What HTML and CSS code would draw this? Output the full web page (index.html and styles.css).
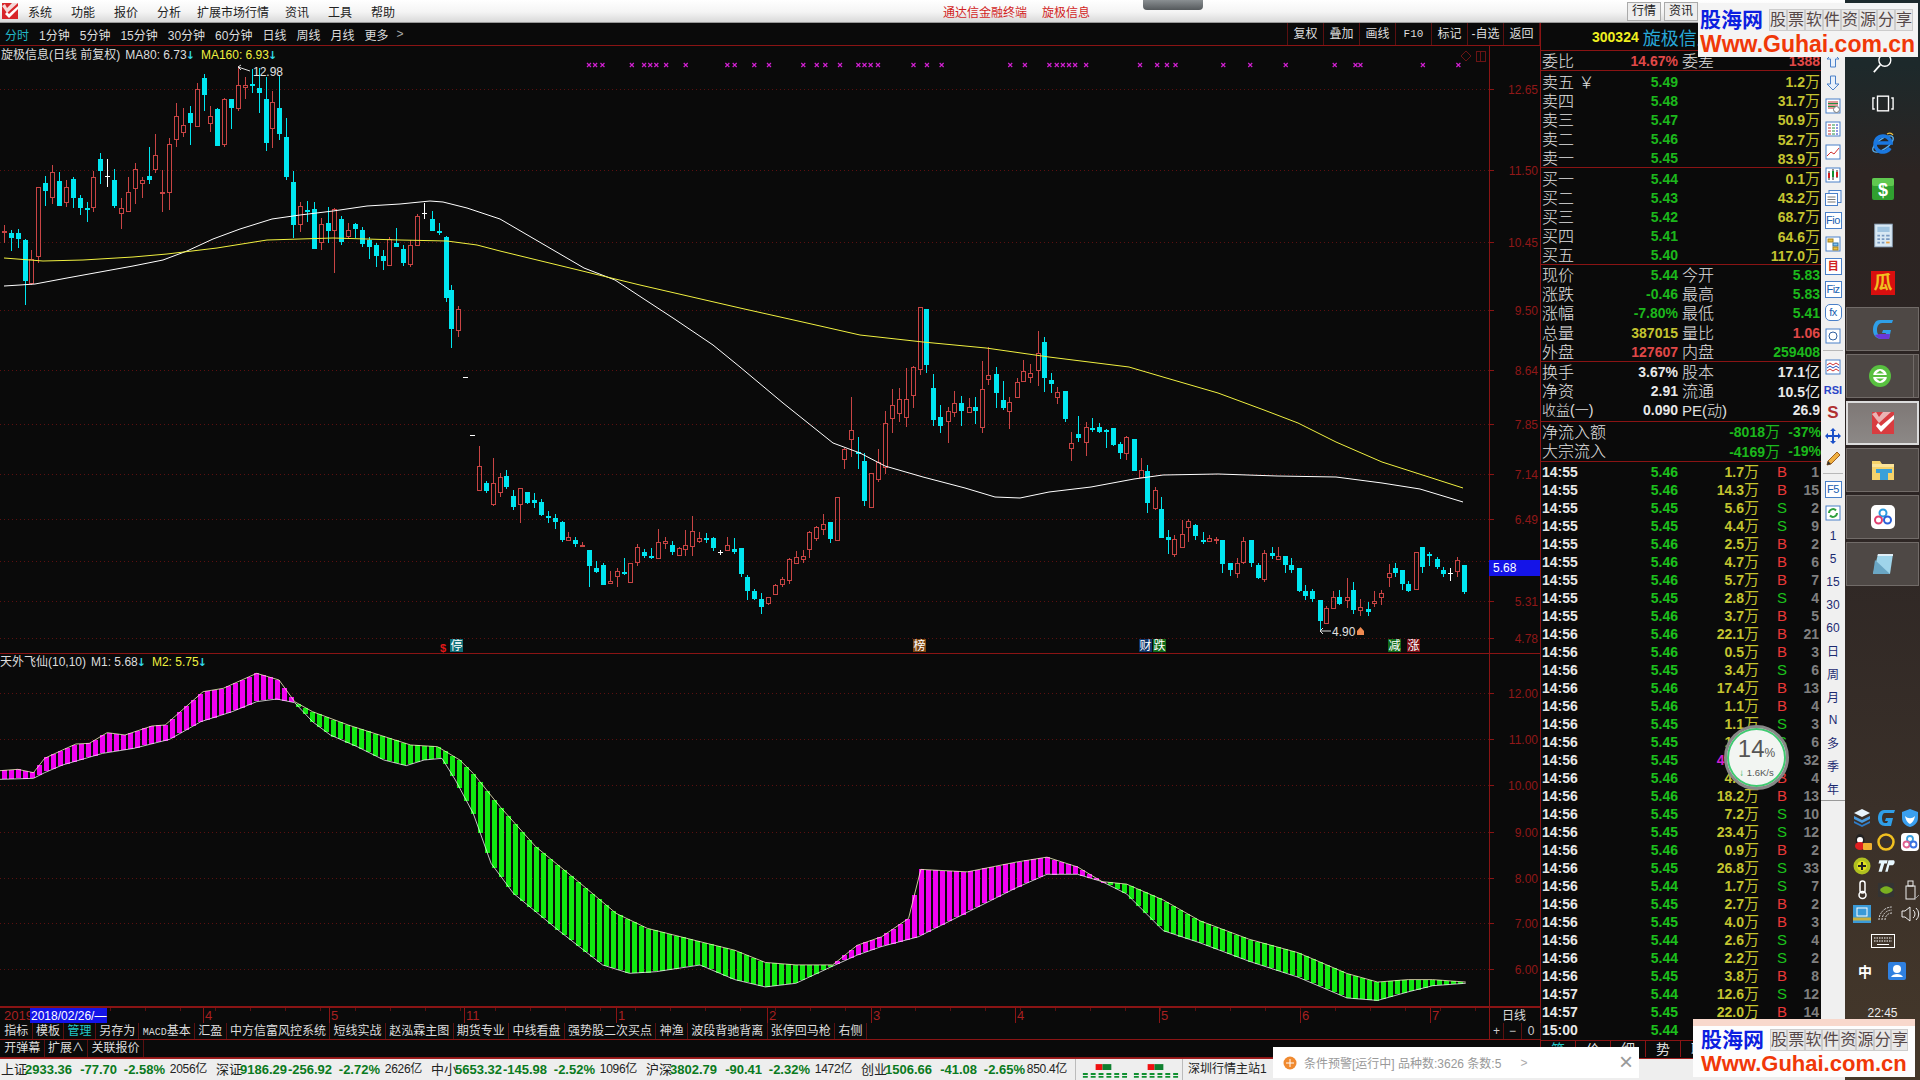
FILE: index.html
```html
<!DOCTYPE html>
<html lang="zh-CN">
<head>
<meta charset="utf-8">
<title>旋极信息</title>
<link rel="stylesheet" href="styles.css">
</head>
<body>
<div class="app">
  <div class="main">
    <header class="titlebar">
      <svg class="logo" viewBox="0 0 16 16"><rect width="16" height="16" fill="#d8262a"/><path d="M0 3 L5 10 L16 0 L10 0 L5 5 L3 1 Z" fill="#f4d8d8"/><path d="M3 11 L7 15 L16 6 L16 3 L7 11 L5 9Z" fill="#fff"/></svg>
      <nav class="menu"><span>系统</span><span>功能</span><span>报价</span><span>分析</span><span class="wide">扩展市场行情</span><span>资讯</span><span>工具</span><span>帮助</span></nav>
      <div class="title-center"><span>通达信金融终端</span><span>旋极信息</span></div>
      <div class="grab"></div>
      <div class="title-btns"><span>行情</span><span>资讯</span></div>
    </header>
    <div class="workspace">
      <section class="left">
        <div class="toolbar">
          <div class="periods"><span class="on">分时</span><span>1分钟</span><span>5分钟</span><span>15分钟</span><span>30分钟</span><span>60分钟</span><span>日线</span><span>周线</span><span>月线</span><span>更多</span><span class="more">&gt;</span></div>
          <div class="tools"><span>复权</span><span>叠加</span><span>画线</span><span class="f10">F10</span><span>标记</span><span>-自选</span><span>返回</span></div>
        </div>
        <div class="panel panel-up">
          <svg id="upper" class="chart" width="1540" height="607" viewBox="0 46 1540 607"></svg>
          <div class="legend"><span>旋极信息(日线 前复权)</span><span class="white">MA80: 6.73<b>↓</b></span><span class="yellow">MA160: 6.93<b>↓</b></span></div>
        </div>
        <div class="panel panel-low">
          <svg id="lower" class="chart" width="1540" height="352" viewBox="0 654 1540 352"></svg>
          <div class="legend legend-low"><span>天外飞仙(10,10)</span><span class="white">M1: 5.68<b>↓</b></span><span class="yellow">M2: 5.75<b>↓</b></span></div>
        </div>
        <svg id="axis" class="axis" width="1540" height="16" viewBox="0 1007 1540 16"></svg>
        <div class="tabs">
          <span>指标</span><span>模板</span><span class="on">管理</span><span>另存为</span><span><i>MACD</i>基本</span><span>汇盈</span><span>中方信富风控系统</span><span>短线实战</span><span>赵泓霖主图</span><span>期货专业</span><span>中线看盘</span><span>强势股二次买点</span><span>神渔</span><span>波段背驰背离</span><span>张停回马枪</span><span>右侧</span>
          <div class="zoomers"><span>+</span><span>−</span><span>0</span></div>
        </div>
        <div class="tabs tabs-2"><span>开弹幕</span><span>扩展∧</span><span>关联报价</span></div>
      </section>
      <section class="quote">
        <div class="q-head"><b>300324</b><span>旋极信息</span></div>
        <div class="q-sec q-ratio"><div class="q"><span>委比</span><span class="red">14.67%</span><span>委差</span><span class="red">1388</span></div></div>
        <div class="q-sec q-book">
          <div class="q"><span>卖五 ￥</span><span class="grn">5.49</span><span></span><span class="yel">1.2<i>万</i></span></div>
          <div class="q"><span>卖四</span><span class="grn">5.48</span><span></span><span class="yel">31.7<i>万</i></span></div>
          <div class="q"><span>卖三</span><span class="grn">5.47</span><span></span><span class="yel">50.9<i>万</i></span></div>
          <div class="q"><span>卖二</span><span class="grn">5.46</span><span></span><span class="yel">52.7<i>万</i></span></div>
          <div class="q"><span>卖一</span><span class="grn">5.45</span><span></span><span class="yel">83.9<i>万</i></span></div>
        </div>
        <div class="q-sec q-book">
          <div class="q"><span>买一</span><span class="grn">5.44</span><span></span><span class="yel">0.1<i>万</i></span></div>
          <div class="q"><span>买二</span><span class="grn">5.43</span><span></span><span class="yel">43.2<i>万</i></span></div>
          <div class="q"><span>买三</span><span class="grn">5.42</span><span></span><span class="yel">68.7<i>万</i></span></div>
          <div class="q"><span>买四</span><span class="grn">5.41</span><span></span><span class="yel">64.6<i>万</i></span></div>
          <div class="q"><span>买五</span><span class="grn">5.40</span><span></span><span class="yel">117.0<i>万</i></span></div>
        </div>
        <div class="q-sec q-book">
          <div class="q"><span>现价</span><span class="grn">5.44</span><span>今开</span><span class="grn">5.83</span></div>
          <div class="q"><span>涨跌</span><span class="grn">-0.46</span><span>最高</span><span class="grn">5.83</span></div>
          <div class="q"><span>涨幅</span><span class="grn">-7.80%</span><span>最低</span><span class="grn">5.41</span></div>
          <div class="q"><span>总量</span><span class="yel">387015</span><span>量比</span><span class="red">1.06</span></div>
          <div class="q"><span>外盘</span><span class="red">127607</span><span>内盘</span><span class="grn">259408</span></div>
        </div>
        <div class="q-sec q-info">
          <div class="q"><span>换手</span><span class="wht">3.67%</span><span>股本</span><span class="wht">17.1<i>亿</i></span></div>
          <div class="q"><span>净资</span><span class="wht">2.91</span><span>流通</span><span class="wht">10.5<i>亿</i></span></div>
          <div class="q"><span>收益(一)</span><span class="wht">0.090</span><span>PE(动)</span><span class="wht">26.9</span></div>
        </div>
        <div class="q-sec q-flow">
          <div class="f"><span>净流入额</span><span class="grn">-8018<i>万</i></span><span class="grn">-37%</span></div>
          <div class="f"><span>大宗流入</span><span class="grn">-4169<i>万</i></span><span class="grn">-19%</span></div>
        </div>
        <div class="ticks">
          <div class="t buy"><span>14:55</span><span>5.46</span><span>1.7<i>万</i></span><span>B</span><span>1</span></div>
          <div class="t buy"><span>14:55</span><span>5.46</span><span>14.3<i>万</i></span><span>B</span><span>15</span></div>
          <div class="t sel"><span>14:55</span><span>5.45</span><span>5.6<i>万</i></span><span>S</span><span>2</span></div>
          <div class="t sel"><span>14:55</span><span>5.45</span><span>4.4<i>万</i></span><span>S</span><span>9</span></div>
          <div class="t buy"><span>14:55</span><span>5.46</span><span>2.5<i>万</i></span><span>B</span><span>2</span></div>
          <div class="t buy"><span>14:55</span><span>5.46</span><span>4.7<i>万</i></span><span>B</span><span>6</span></div>
          <div class="t buy"><span>14:55</span><span>5.46</span><span>5.7<i>万</i></span><span>B</span><span>7</span></div>
          <div class="t sel"><span>14:55</span><span>5.45</span><span>2.8<i>万</i></span><span>S</span><span>4</span></div>
          <div class="t buy"><span>14:55</span><span>5.46</span><span>3.7<i>万</i></span><span>B</span><span>5</span></div>
          <div class="t buy"><span>14:56</span><span>5.46</span><span>22.1<i>万</i></span><span>B</span><span>21</span></div>
          <div class="t buy"><span>14:56</span><span>5.46</span><span>0.5<i>万</i></span><span>B</span><span>3</span></div>
          <div class="t sel"><span>14:56</span><span>5.45</span><span>3.4<i>万</i></span><span>S</span><span>6</span></div>
          <div class="t buy"><span>14:56</span><span>5.46</span><span>17.4<i>万</i></span><span>B</span><span>13</span></div>
          <div class="t buy"><span>14:56</span><span>5.46</span><span>1.1<i>万</i></span><span>B</span><span>4</span></div>
          <div class="t sel"><span>14:56</span><span>5.45</span><span>1.1<i>万</i></span><span>S</span><span>3</span></div>
          <div class="t sel"><span>14:56</span><span>5.45</span><span>1.2<i>万</i></span><span>S</span><span>6</span></div>
          <div class="t sel big"><span>14:56</span><span>5.45</span><span>43.6<i>万</i></span><span>S</span><span>32</span></div>
          <div class="t buy"><span>14:56</span><span>5.46</span><span>4.0<i>万</i></span><span>B</span><span>4</span></div>
          <div class="t buy"><span>14:56</span><span>5.46</span><span>18.2<i>万</i></span><span>B</span><span>13</span></div>
          <div class="t sel"><span>14:56</span><span>5.45</span><span>7.2<i>万</i></span><span>S</span><span>10</span></div>
          <div class="t sel"><span>14:56</span><span>5.45</span><span>23.4<i>万</i></span><span>S</span><span>12</span></div>
          <div class="t buy"><span>14:56</span><span>5.46</span><span>0.9<i>万</i></span><span>B</span><span>2</span></div>
          <div class="t sel"><span>14:56</span><span>5.45</span><span>26.8<i>万</i></span><span>S</span><span>33</span></div>
          <div class="t sel"><span>14:56</span><span>5.44</span><span>1.7<i>万</i></span><span>S</span><span>7</span></div>
          <div class="t buy"><span>14:56</span><span>5.45</span><span>2.7<i>万</i></span><span>B</span><span>2</span></div>
          <div class="t buy"><span>14:56</span><span>5.45</span><span>4.0<i>万</i></span><span>B</span><span>3</span></div>
          <div class="t sel"><span>14:56</span><span>5.44</span><span>2.6<i>万</i></span><span>S</span><span>4</span></div>
          <div class="t sel"><span>14:56</span><span>5.44</span><span>2.2<i>万</i></span><span>S</span><span>2</span></div>
          <div class="t buy"><span>14:56</span><span>5.45</span><span>3.8<i>万</i></span><span>B</span><span>8</span></div>
          <div class="t sel"><span>14:57</span><span>5.44</span><span>12.6<i>万</i></span><span>S</span><span>12</span></div>
          <div class="t buy"><span>14:57</span><span>5.45</span><span>22.0<i>万</i></span><span>B</span><span>14</span></div>
          <div class="t sel"><span>15:00</span><span>5.44</span><span></span><span></span><span></span></div>
        </div>
        <div class="q-tabs"><span class="on">笔</span><span>价</span><span>细</span><span>势</span><span>联</span></div>
      </section>
      <aside class="strip">
        <div class="ic"><svg viewBox="0 0 18 18"><path d="M9 2 L15 8 H11.5 V16 H6.5 V8 H3Z" fill="#e8f0fa" stroke="#4a80c8"/></svg></div>
        <div class="ic"><svg viewBox="0 0 18 18"><path d="M9 16 L15 10 H11.5 V2 H6.5 V10 H3Z" fill="#e8f0fa" stroke="#4a80c8"/></svg></div>
        <div class="ic"><svg viewBox="0 0 18 18"><rect x="2" y="2" width="14" height="14" fill="#fff" stroke="#4a80c8"/><path d="M4 5h10M4 8h10M4 11h6" stroke="#c03030"/><path d="M4 6.500h10M4 9.500h8" stroke="#209040"/><circle cx="12.500" cy="12.500" r="3" fill="#fff" stroke="#777"/></svg></div>
        <div class="ic"><svg viewBox="0 0 18 18"><rect x="2" y="2" width="14" height="14" fill="#fff" stroke="#4a80c8"/><path d="M4 5h3M4 8h3M4 11h3M4 14h3" stroke="#c03030"/><path d="M8 5h3M8 8h3M8 11h3M8 14h3" stroke="#209040"/><path d="M12 5h2M12 8h2M12 11h2M12 14h2" stroke="#2030c0"/></svg></div>
        <div class="ic"><svg viewBox="0 0 18 18"><rect x="2" y="2" width="14" height="14" fill="#fff" stroke="#4a80c8"/><path d="M3 13 L7 9 L10 11 L15 5" fill="none" stroke="#d03030"/></svg></div>
        <div class="ic"><svg viewBox="0 0 18 18"><rect x="2" y="2" width="14" height="14" fill="#fff" stroke="#4a80c8"/><path d="M5 5v9M9 3v11M13 4v8" stroke="#222"/><rect x="4" y="7" width="2" height="5" fill="#d02020"/><rect x="8" y="5" width="2" height="6" fill="#109030"/><rect x="12" y="6" width="2" height="5" fill="#d02020"/></svg></div>
        <div class="ic"><svg viewBox="0 0 18 18"><rect x="5" y="1.500" width="12" height="12" fill="#f4f8ff" stroke="#4a80c8"/><rect x="1.500" y="4.500" width="12" height="12" fill="#fff" stroke="#4a80c8"/><path d="M3.500 8h8M3.500 10.500h8M3.500 13h8" stroke="#777"/></svg></div>
        <div class="ic boxed"><span>Fio</span></div>
        <div class="ic"><svg viewBox="0 0 18 18"><rect x="2" y="2" width="14" height="14" fill="#fff" stroke="#4a80c8"/><rect x="4" y="4" width="5" height="3" fill="#f0c040" stroke="#a08020"/><rect x="9" y="8" width="5" height="3" fill="#80c0f0" stroke="#3070a0"/><rect x="9" y="12" width="5" height="3" fill="#f0c040" stroke="#a08020"/></svg></div>
        <div class="ic boxed"><span class="mu">目</span></div>
        <div class="ic boxed"><span>Fiz</span></div>
        <div class="ic boxed round"><span><em>fx</em></span></div>
        <div class="ic"><svg viewBox="0 0 18 18"><rect x="2" y="2" width="14" height="14" fill="#fff" stroke="#4a80c8"/><circle cx="9" cy="9" r="4" fill="none" stroke="#3060a0"/></svg></div>
        <div class="sep"></div>
        <div class="ic"><svg viewBox="0 0 18 18"><rect x="2" y="2" width="14" height="14" fill="#fff" stroke="#4a80c8"/><path d="M3 7l3-2 3 2 3-2 3 2" fill="none" stroke="#d03030"/><path d="M3 10l3-2 3 2 3-2 3 2" fill="none" stroke="#2050c0"/><path d="M3 13l3-2 3 2 3-2 3 2" fill="none" stroke="#d03030"/></svg></div>
        <div class="ic rsi">RSI</div>
        <div class="ic dollar">S</div>
        <div class="ic"><svg viewBox="0 0 18 18"><path d="M9 1l3 3h-2v4h4V6l3 3-3 3v-2h-4v4h2l-3 3-3-3h2v-4H4v2L1 9l3-3v2h4V4H6z" fill="#1a50c8"/></svg></div>
        <div class="ic"><svg viewBox="0 0 18 18"><path d="M3 15l1-4L13 2l3 3-9 9z" fill="#f0b040" stroke="#a06020"/><path d="M3 15l1-4 3 3z" fill="#333"/></svg></div>
        <div class="sep"></div>
        <div class="ic boxed"><span>F5</span></div>
        <div class="ic"><svg viewBox="0 0 18 18"><rect x="2" y="2" width="14" height="14" fill="#fff" stroke="#4a80c8"/><path d="M5 9a4 4 0 0 1 7-2.500M13 9a4 4 0 0 1-7 2.500" fill="none" stroke="#30a040" stroke-width="2"/></svg></div>
        <div class="ic n">1</div><div class="ic n">5</div><div class="ic n">15</div><div class="ic n">30</div><div class="ic n">60</div>
        <div class="ic n">日</div><div class="ic n">周</div><div class="ic n">月</div><div class="ic n">N</div><div class="ic n">多</div><div class="ic n">季</div><div class="ic n">年</div>
        <div class="strip-end"></div>
      </aside>
    </div>
    <footer class="status">
      <div class="idx"><span>上证</span><b>2933.36</b><b>-77.70</b><b>-2.58%</b><span>2056亿</span></div>
      <div class="idx"><span>深证</span><b>9186.29</b><b>-256.92</b><b>-2.72%</b><span>2626亿</span></div>
      <div class="idx"><span>中小</span><b>5653.32</b><b>-145.98</b><b>-2.52%</b><span>1096亿</span></div>
      <div class="idx"><span>沪深</span><b>3802.79</b><b>-90.41</b><b>-2.32%</b><span>1472亿</span></div>
      <div class="idx"><span>创业</span><b>1506.66</b><b>-41.08</b><b>-2.65%</b><span>850.4亿</span></div>
      <svg class="meter" viewBox="0 0 108 22" width="108" height="22">
        <rect x="20" y="5" width="7" height="6" fill="#f01010"/><rect x="27" y="5" width="9" height="6" fill="#108030"/>
        <rect x="73" y="5" width="7" height="6" fill="#f01010"/><rect x="80" y="5" width="9" height="6" fill="#108030"/>
        <path d="M7 15h5M15 15h5M23 15h5M31 15h5M39 15h5M47 15h5M59 15h5M67 15h5M75 15h5M83 15h5M91 15h5M99 15h5M7 18h5M15 18h5M23 18h5M31 18h5M39 18h5M47 18h5M59 18h5M67 18h5M75 18h5M83 18h5M91 18h5M99 18h5" stroke="#109030" stroke-width="2"/>
      </svg>
      <div class="station">深圳行情主站1</div>
    </footer>
  </div>
  <aside class="desktop">
    <div class="dock d-search"><svg viewBox="0 0 24 24" width="22" height="22"><circle cx="14" cy="9" r="6.500" fill="none" stroke="#fff" stroke-width="1.500"/><path d="M9 14 L2 22" stroke="#fff" stroke-width="1.800"/></svg></div>
    <div class="dock d-task"><svg viewBox="0 0 24 18" width="22" height="17"><rect x="6" y="1" width="12" height="16" fill="none" stroke="#fff" stroke-width="1.500"/><path d="M3 3H1v12h2M21 3h2v12h-2" fill="none" stroke="#fff" stroke-width="1.500"/></svg></div>
    <div class="dock d-ie"><svg viewBox="0 0 24 24" width="24" height="24"><ellipse cx="12" cy="12" rx="12" ry="5" transform="rotate(-35 12 12)" fill="none" stroke="#58b0f0" stroke-width="1.300"/><path d="M19 16 A8 8 0 1 1 20 11 H6" fill="none" stroke="#1a78e0" stroke-width="3.600"/><path d="M16 2 Q20 0 22 3" fill="none" stroke="#f0c040" stroke-width="1.200"/></svg></div>
    <div class="dock d-cash"><svg viewBox="0 0 24 24" width="24" height="24"><rect x="1" y="1" width="22" height="22" rx="2" fill="#30a030"/><rect x="1" y="1" width="22" height="8" rx="2" fill="#60c850"/><text x="12" y="19" class="d-dollar">$</text></svg></div>
    <div class="dock d-calc"><svg viewBox="0 0 24 28" width="21" height="25"><rect x="2" y="1" width="20" height="26" fill="#d8e8f4" stroke="#90a8c0"/><rect x="5" y="4" width="14" height="6" fill="#a0c4e0"/><path d="M5 14h3M10 14h3M15 14h4M5 18h3M10 18h3M15 18h4M5 22h3M10 22h3" stroke="#7898c0" stroke-width="2"/><path d="M15 22h4" stroke="#e8a040" stroke-width="2"/></svg></div>
    <div class="dock d-gua"><span>瓜</span></div>
    <div class="tile"><svg viewBox="0 0 24 24" width="24" height="24"><path d="M22 3H9C4 3 2 8 2 13c0 6 4 9 9 9h7l2-9h-8l-1 3h4l-1 3h-3c-3 0-5-2-5-6s2-7 5-7h10z" fill="#2f9fe8"/><path d="M4 18c2 3 5 4 7 4h7l1-5H9z" fill="#6a38d8"/></svg></div>
    <div class="tile tile-cut"><svg viewBox="0 0 24 24" width="24" height="24"><circle cx="12" cy="12" r="11" fill="#58c040"/><circle cx="12" cy="12" r="7" fill="#fff"/><path d="M5 12h14" stroke="#58c040" stroke-width="2"/><path d="M8 9.500l4-3 4 3zM8 14.500h8l-4 3z" fill="#58c040"/></svg></div>
    <div class="tile tile-on"><svg viewBox="0 0 24 24" width="24" height="24"><rect x="1" y="1" width="22" height="22" fill="#d83c40"/><path d="M1 3 L8 12 L20 1 L12 1 L8 6 L5 1 Z" fill="#eab4b4"/><path d="M5 15 L10 21 L23 8 L23 4 L10 15 L7 12Z" fill="#fff"/></svg></div>
    <div class="tile"><svg viewBox="0 0 24 24" width="24" height="22"><path d="M1 3h8l2 3h12v16H1z" fill="#f6d36a"/><rect x="9" y="15" width="8" height="7" fill="#3aa0d8"/><rect x="5" y="11" width="16" height="4" fill="#3aa0d8"/><rect x="1" y="6" width="22" height="3" fill="#fbe49a"/></svg></div>
    <div class="tile"><svg viewBox="0 0 24 24" width="24" height="24"><rect x="0" y="0" width="24" height="24" rx="5" fill="#fff"/><circle cx="12" cy="8" r="3.500" fill="none" stroke="#2a9ce0" stroke-width="2"/><circle cx="7.500" cy="15" r="3.500" fill="none" stroke="#e04070" stroke-width="2"/><circle cx="16.500" cy="15" r="3.500" fill="none" stroke="#2a60d8" stroke-width="2"/></svg></div>
    <div class="tile"><svg viewBox="0 0 24 24" width="24" height="24"><path d="M7 2h15l-3 20H2z" fill="#9fd4ea"/><path d="M4 8L2 22h17z" fill="#6aa6c4"/><path d="M7 2h15v2H6.500z" fill="#dfeef6"/></svg></div>
    <div class="tray">
      <svg viewBox="0 0 20 20"><path d="M10 1l8 4-8 4-8-4z" fill="#e8f4fc"/><path d="M2 8l8 4 8-4v3l-8 4-8-4z" fill="#4a9ce0"/><path d="M2 13l8 4 8-4v2l-8 4-8-4z" fill="#2f7cc8"/></svg>
      <svg viewBox="0 0 20 20"><path d="M19 2H8C4 2 2 6 2 10c0 5 3 8 7 8h6l2-8h-7l-1 3h3l-1 2H9c-2 0-3-2-3-5s1-5 3-5h9z" fill="#2f9fe8"/></svg>
      <svg viewBox="0 0 20 20"><path d="M10 1l8 3v6c0 5-4 8-8 9-4-1-8-4-8-9V4z" fill="#3aa0f0"/><path d="M5 8c3 3 7 3 10 0-1 5-3 7-5 8-2-1-4-3-5-8z" fill="#fff"/></svg>
      <svg viewBox="0 0 20 20"><ellipse cx="8" cy="8" rx="4.500" ry="6" fill="#222"/><circle cx="8" cy="8" r="3" fill="#fff"/><ellipse cx="8" cy="14" rx="5" ry="4" fill="#e02020"/><rect x="11" y="11" width="9" height="7" rx="1" fill="#f0b030"/></svg>
      <svg viewBox="0 0 20 20"><circle cx="10" cy="10" r="7.500" fill="none" stroke="#f0c020" stroke-width="2.500"/><path d="M10 10h6M6 7l4 5" stroke="#333" stroke-width="2"/></svg>
      <svg viewBox="0 0 20 20"><rect x="1" y="1" width="18" height="18" rx="4" fill="#fff"/><circle cx="10" cy="7" r="3" fill="none" stroke="#3aa0e0" stroke-width="1.800"/><circle cx="6.500" cy="12.500" r="3" fill="none" stroke="#e06090" stroke-width="1.800"/><circle cx="13.500" cy="12.500" r="3" fill="none" stroke="#3a70e0" stroke-width="1.800"/></svg>
      <svg viewBox="0 0 20 20"><circle cx="10" cy="10" r="8.500" fill="#b0c020"/><circle cx="10" cy="10" r="5" fill="#e0e020"/><path d="M10 6v8M6 10h8" stroke="#222" stroke-width="2"/></svg>
      <svg viewBox="0 0 24 20"><path d="M4 3h10l-1 4H10L7 17H3L6 7H3zM15 3h6c2 0 2 5-1 6h-4l-2 8h-3z" fill="#e8f8ff"/></svg>
      <span class="tray-blank"></span>
      <svg viewBox="0 0 20 20"><rect x="8" y="1" width="5" height="12" rx="2.500" fill="none" stroke="#fff" stroke-width="1.500"/><circle cx="10.500" cy="15" r="3.500" fill="none" stroke="#fff" stroke-width="1.500"/></svg>
      <svg viewBox="0 0 20 20"><rect x="2" y="3" width="16" height="14" fill="#333"/><path d="M4 10c3-5 9-5 13 0-4 5-10 5-13 0z" fill="#7ab020"/></svg>
      <svg viewBox="0 0 20 20"><rect x="6" y="6" width="9" height="13" fill="none" stroke="#eee"/><rect x="8" y="1" width="5" height="5" fill="none" stroke="#eee"/><path d="M14 16l2 2 3-3" fill="none" stroke="#999"/></svg>
      <svg viewBox="0 0 20 20"><rect x="1" y="1" width="18" height="18" fill="#3a9ad8"/><rect x="5" y="4" width="10" height="8" fill="none" stroke="#fff"/><path d="M1 15h18" stroke="#c8b040" stroke-width="3"/></svg>
      <svg viewBox="0 0 20 20"><path d="M3 16a13 13 0 0 1 13-13M6 16a10 10 0 0 1 10-10M9 16a7 7 0 0 1 7-7" fill="none" stroke="#ddd" stroke-dasharray="2 1"/></svg>
      <svg viewBox="0 0 20 20"><path d="M2 7h3l5-4v14l-5-4H2z" fill="none" stroke="#eee"/><path d="M13 6a5 5 0 0 1 0 8M16 4a8 8 0 0 1 0 12" fill="none" stroke="#eee"/></svg>
    </div>
    <div class="kbd"><svg viewBox="0 0 24 14" width="24" height="14"><rect x=".5" y=".5" width="23" height="13" fill="none" stroke="#fff"/><path d="M3 4h18M3 7h18" stroke="#fff" stroke-dasharray="1.500 1"/><path d="M6 10.500h12" stroke="#fff"/></svg></div>
    <div class="ime"><span>中</span><svg viewBox="0 0 18 18" width="18" height="18"><rect width="18" height="18" rx="2" fill="#2f80e0"/><circle cx="9" cy="7" r="4" fill="#fff"/><path d="M3 15c2-4 10-4 12 0z" fill="#fff"/></svg></div>
    <div class="clock">22:45</div>
  </aside>

  <div class="wm wm-top">
    <div class="wm-row"><b>股海网</b><div class="wm-cells"><span>股</span><span>票</span><span>软</span><span>件</span><span>资</span><span>源</span><span>分</span><span>享</span></div></div>
    <div class="wm-url">Www.Guhai.com.cn</div>
  </div>
  <div class="wm wm-bot">
    <div class="wm-row"><b>股海网</b><div class="wm-cells"><span>股</span><span>票</span><span>软</span><span>件</span><span>资</span><span>源</span><span>分</span><span>享</span></div></div>
    <div class="wm-url">Www.Guhai.com.cn</div>
  </div>
  <div class="notice"><svg viewBox="0 0 14 14" width="14" height="14"><circle cx="7" cy="7" r="6.500" fill="#f08a30"/><path d="M3 7h8M7 3v8" stroke="#fff"/></svg><span>条件预警[运行中] 品种数:3626 条数:5</span><em>&gt;</em><b>×</b></div>
  <div class="speed"><div class="speed-pct">14<small>%</small></div><div class="speed-rate"><b>↓</b> 1.6K/s</div></div>
</div>
<script src="chart.js"></script>
</body>
</html>
```
FILE: styles.css
```css
* { box-sizing: border-box; }
html, body { margin: 0; padding: 0; background: #0a0a0a; }
body { font-family: "Liberation Sans", "Noto Sans CJK SC", sans-serif; }
.app { position: relative; width: 1920px; height: 1080px; display: flex; overflow: hidden; }
i, em { font-style: normal; }

.main { width: 1845px; height: 1080px; display: flex; flex-direction: column; background: #0a0a0a; }

.titlebar { height: 23px; display: flex; align-items: center; background: linear-gradient(#fff, #f4f4f4 55%, #d9d9d9); border-bottom: 1px solid #999; color: #222; font-size: 12px; position: relative; flex: none; }
.logo { width: 16px; height: 16px; margin: 0 0 0 2px; }
.menu { display: flex; margin-left: 10px; gap: 19px; }
.menu .wide { margin: 0 -3px; }
.title-center { position: absolute; left: 943px; top: 3px; display: flex; gap: 15px; color: #d21f1f; }
.grab { position: absolute; left: 1143px; top: 0; width: 60px; height: 10px; background: linear-gradient(#8a8f92, #55595c); border-radius: 0 0 4px 4px; }
.title-btns { position: absolute; left: 1627px; top: 2px; display: flex; gap: 3px; }
.title-btns span { width: 34px; height: 19px; border: 1px solid #aaa; background: #eee; text-align: center; line-height: 17px; }

.workspace { flex: 1; display: flex; min-height: 0; }
.left { width: 1540px; display: flex; flex-direction: column; flex: none; }
.toolbar { height: 23px; display: flex; justify-content: space-between; align-items: stretch; border-bottom: 1px solid #8a1414; color: #ddd; font-size: 12px; flex: none; }
.periods { display: flex; gap: 10px; padding-left: 5px; align-items: center; }
.periods .on { color: #22b8c8; }
.periods .more { color: #aaa; margin-left: -2px; }
.tools { display: flex; border-left: 1px solid #5a1010; }
.tools span { width: 36px; text-align: center; line-height: 22px; border-right: 1px solid #5a1010; white-space: nowrap; }
.tools .f10 { font-family: "Liberation Mono", monospace; font-size: 11px; }

.panel { position: relative; border-bottom: 1px solid #8a1414; flex: none; }
.panel-up { height: 608px; }
.panel-low { height: 353px; }
.chart, .axis { display: block; }
.axis { flex: none; }
.legend { position: absolute; left: 1px; top: 1px; display: flex; gap: 5px; font-size: 12px; color: #ddd; line-height: 16px; white-space: nowrap; }
.legend .yellow { color: #f0f040; margin-left: 2px; }
.legend .white { color: #ddd; }
.legend b { color: #30d8e8; font-family: "DejaVu Sans", sans-serif; font-size: 11px; margin: 0 -1px; }
.legend-low { top: 0; left: 0; }

.tabs { height: 17px; display: flex; border-bottom: 1px solid #8a1414; font-size: 12px; color: #ddd; line-height: 16px; padding-left: 1px; flex: none; position: relative; }
.tabs > span { padding: 0 3.300px; border-right: 1px solid #5a1010; white-space: nowrap; }
.tabs .on { color: #22c8c8; }
.tabs i { font-family: "Liberation Mono", monospace; font-size: 10px; }
.tabs-2 { height: 18px; line-height: 17px; }
.zoomers { position: absolute; right: 0; top: 0; height: 16px; width: 51px; display: grid; grid-template-columns: 14px 18px 19px; border-left: 1px solid #8a1414; text-align: center; color: #ccc; }
.zoomers span { border-right: 1px solid #5a1010; }

.quote { width: 281px; border-left: 1px solid #8a1414; display: flex; flex-direction: column; flex: none; font-size: 14px; }
.q-head { height: 28px; display: flex; align-items: center; gap: 4px; padding-left: 51px; border-bottom: 1px solid #8a1414; flex: none; }
.q-head b { color: #f0f020; font-size: 14px; }
.q-head span { color: #28a8d8; font-size: 18px; white-space: nowrap; }
.q-sec { border-bottom: 1px solid #8a1414; flex: none; }
.q-ratio { height: 20px; padding-top: 1px; }
.q-book { height: 97px; padding-top: 1px; }
.q-info { height: 60px; }
.q-flow { height: 40px; }
.q { display: grid; grid-template-columns: 40px 96px 48px 94px; height: 19.200px; padding-left: 1px; align-items: center; white-space: nowrap; }
.q-info .q { height: 19.600px; }
.q > span { line-height: 19px; }
.q > span:nth-child(odd) { color: #e0e0e0; font-size: 16px; font-weight: 300; }
.q > span:nth-child(3) { padding-left: 4px; }
.q > span:nth-child(even) { text-align: right; font-weight: 700; }
.q-info .q:last-child > span:nth-child(3) { font-size: 15px; }
.q-info .q:last-child > span:first-child { font-size: 14px; }
.red { color: #e04848; } .grn { color: #1cb81c; } .yel { color: #c4c430; } .wht { color: #e8e8e8; }
.q i, .f i, .t i { font-weight: 400; font-size: 15px; }
.f { display: grid; grid-template-columns: 100px 138px 41px; height: 19.500px; padding-left: 1px; align-items: center; white-space: nowrap; }
.f > span { line-height: 19px; font-weight: 700; text-align: right; }
.f > span:first-child { color: #e0e0e0; font-size: 16px; font-weight: 300; text-align: left; }
.ticks { flex: none; height: 578px; padding-top: 1px; }
.t { display: grid; grid-template-columns: 60px 76px 81px 41px 19px; height: 18px; padding-left: 1px; align-items: center; font-weight: 700; line-height: 18px; white-space: nowrap; }
.t > span:nth-child(1) { color: #e8e8e8; }
.t > span:nth-child(2) { color: #1cc01c; text-align: right; }
.t > span:nth-child(3) { color: #c4c430; text-align: right; }
.t > span:nth-child(4) { text-align: center; padding-left: 5px; font-weight: 400; font-size: 15px; }
.t > span:nth-child(5) { color: #808080; text-align: right; }
.t.buy > span:nth-child(4) { color: #e83838; }
.t.sel > span:nth-child(4) { color: #1cc01c; }
.t.big > span:nth-child(3) { color: #d020d0; }
.q-tabs { flex: none; height: 17px; display: grid; grid-template-columns: repeat(8, 35px); border-top: 1px solid #8a1414; font-size: 14px; color: #ddd; line-height: 16px; text-align: center; }
.q-tabs span { border-right: 1px solid #8a1414; }
.q-tabs .on { color: #22c8c8; }

.strip { width: 24px; background: #f0f0f0; flex: none; padding-top: 25px; display: flex; flex-direction: column; align-items: center; color: #1c2a70; font-size: 12px; }
.ic { height: 23px; width: 24px; display: flex; align-items: center; justify-content: center; flex: none; }
.ic svg { width: 18px; height: 18px; }
.boxed span { width: 17px; height: 17px; border: 1px solid #4a80c8; background: #fff; color: #2060b0; font-size: 11px; line-height: 15px; text-align: center; letter-spacing: -.5px; }
.boxed .mu { color: #d02020; font-weight: 700; }
.round span { border-radius: 5px; }
.rsi { color: #2b46c8; font-weight: 700; font-size: 11px; }
.dollar { color: #b03030; font-weight: 700; font-size: 17px; }
.n { font-size: 12px; }
.sep { height: 8px; width: 24px; flex: none; position: relative; }
.sep::after { content: ""; position: absolute; left: 2px; right: 2px; top: 3px; height: 1px; background: #b8b8b8; }
.strip-end { width: 24px; height: 1px; background: #999; margin-top: 0; flex: none; }

.status { height: 22px; background: #eeeeee; border-top: 1px solid #a02020; display: flex; color: #222; font-size: 12px; padding-left: 1px; flex: none; }
.idx { display: grid; grid-template-columns: 24px 46px 46px 48px 42px 9px; line-height: 21px; white-space: nowrap; width: 215px; flex: none; }
.idx span:first-child { font-size: 13px; }
.idx b { font-size: 13px; color: #0a7a20; text-align: right; }
.idx span:last-child { text-align: right; letter-spacing: -.3px; }
.meter { border-left: 1px solid #bbb; border-right: 1px solid #bbb; flex: none; margin-left: -1px; }
.station { margin-left: 5px; font-size: 12px; line-height: 21px; white-space: nowrap; }

.desktop { width: 75px; height: 1080px; background: linear-gradient(#1d2a2d 0, #1d292b 6%, #2c2422 16%, #2c2524 45%, #3a3029 75%, #45382a 100%); display: flex; flex-direction: column; flex: none; padding-top: 43px; }
.dock { height: 47px; display: flex; align-items: center; justify-content: center; padding-left: 1px; flex: none; }
.d-search { height: 40px; }
.d-task { height: 40px; }
.d-ie { height: 42px; }
.d-gua { height: 48px; }
.d-dollar { fill: #fff; font: 700 18px "Liberation Sans", sans-serif; text-anchor: middle; }
.d-gua span { width: 24px; height: 24px; background: #d80f0f; color: #f0c020; font-size: 19px; font-weight: 700; line-height: 23px; text-align: center; display: block; }
.tile { height: 44px; margin: 0 1px 3px 1px; background: #4e4845; border: 1px solid #716b68; display: flex; align-items: center; justify-content: center; flex: none; }
.tile-cut { margin-right: 6px; position: relative; }
.tile-cut::after { content: ""; position: absolute; right: -6px; top: -1px; bottom: -1px; width: 4px; background: #4e4845; border: 1px solid #716b68; }
.tile-on { background: linear-gradient(#7e7876, #8c8886); border: 2px solid #dcdcdc; }
.tile svg { width: 24px; height: 24px; }
.tray { margin-top: 217px; padding-left: 5px; display: grid; grid-template-columns: repeat(3, 24px); grid-auto-rows: 24px; align-items: center; justify-items: center; }
.tray svg { width: 20px; height: 20px; }
.tray-blank { width: 18px; }
.kbd { text-align: center; margin-top: 1px; height: 28px; display: flex; justify-content: center; align-items: center; }
.ime { display: flex; gap: 16px; padding-left: 13px; align-items: center; height: 28px; margin-top: 2px; color: #fff; font-size: 14px; font-weight: 700; }
.clock { text-align: center; color: #eee; font-size: 12px; margin-top: 21px; line-height: 14px; }

.wm { position: absolute; background: #fdfdfd; padding: 4px 0 0 2px; overflow: hidden; }
.wm-top { left: 1698px; top: 3px; width: 220px; height: 54px; background: #f4f4f4; }
.wm-bot { left: 1693px; top: 1019px; width: 222px; height: 58px; padding: 8px 0 0 8px; background: linear-gradient(#f8d8cc 0 7px, #fdfdfd 7px); }
.wm-row { display: flex; align-items: center; gap: 6px; height: 25px; }
.wm-row b { color: #0d1fe0; font-size: 21px; line-height: 25px; white-space: nowrap; }
.wm-cells { display: grid; grid-template-columns: repeat(8, 18px); }
.wm-cells span { color: #564848; font-size: 16px; line-height: 20px; text-align: center; background: #e8e8e8; border: 1px solid #ccc; }
.wm-url { color: #f03808; font-size: 23px; font-weight: 700; line-height: 24px; white-space: nowrap; }
.wm-bot .wm-url { font-size: 22px; }
.wm-bot .wm-cells { grid-template-columns: repeat(8, 17.300px); }
.notice { position: absolute; left: 1273px; top: 1047px; width: 366px; height: 31px; background: #fff; display: flex; align-items: center; gap: 7px; padding-left: 10px; color: #999; font-size: 12px; white-space: nowrap; }
.notice em { margin-left: 12px; color: #aaa; }
.notice b { position: absolute; right: 6px; top: 1px; font-weight: 400; color: #999; font-size: 24px; line-height: 28px; }
.speed { position: absolute; left: 1724px; top: 725px; width: 65px; height: 65px; border-radius: 50%; background: #f2f5f2; border: 3px solid #888; box-shadow: inset 0 0 0 2px #3ecb70; color: #555; text-align: center; }
.speed-pct { font-size: 24px; line-height: 26px; margin-top: 8px; }
.speed-pct small { font-size: 12px; }
.speed-rate { font-size: 9.500px; line-height: 12px; margin-top: 1px; white-space: nowrap; }
.speed-rate b { color: #20b050; }

.t-axis { fill: #901818; font: 12px "Liberation Sans", sans-serif; text-anchor: end; }
.t-date { fill: #a82020; font: 13px "Liberation Sans", sans-serif; }
.t-tag { fill: #fff; font: 12px "Liberation Sans", sans-serif; }
.t-mark { fill: #e0e0e0; font: 12px "Liberation Sans", sans-serif; }
.t-sig { fill: #fff; font: 12px "Noto Sans CJK SC", sans-serif; text-anchor: middle; }
.t-dollar { fill: #e01818; font: 700 11px "Liberation Sans", sans-serif; }
.t-day { fill: #ddd; font: 12px "Noto Sans CJK SC", sans-serif; }
```
FILE: chart.js
```javascript
var NS = "http://www.w3.org/2000/svg";
function el(parent, name, attrs, text) {
  var e = document.createElementNS(NS, name);
  for (var k in attrs) e.setAttribute(k, attrs[k]);
  if (text !== undefined) e.textContent = text;
  parent.appendChild(e);
  return e;
}
var upper = document.getElementById("upper");
var lower = document.getElementById("lower");
var axis = document.getElementById("axis");
var RED = "#8a1414", GRID = "#5c1010", CYAN = "#00e6f0", CRED = "#c84444";

function frame(svg, ys, labels, y0, y1) {
  ys.forEach(function (y, i) {
    el(svg, "line", { x1: 0, x2: 1489, y1: y + .5, y2: y + .5, stroke: GRID, "stroke-dasharray": "1 3" });
    el(svg, "line", { x1: 1489, x2: 1494, y1: y + .5, y2: y + .5, stroke: RED });
    el(svg, "text", { x: 1538, y: y + 5, "class": "t-axis" }, labels[i]);
  });
  el(svg, "line", { x1: 1489.5, x2: 1489.5, y1: y0, y2: y1, stroke: RED });
}
frame(upper, [89, 170, 242, 310, 370, 424, 474, 519, 561, 601, 638],
  ["12.65", "11.50", "10.45", "9.50", "8.64", "7.85", "7.14", "6.49", "", "5.31", "4.78"], 46, 653);
frame(lower, [693, 739, 785, 832, 878, 923, 969],
  ["12.00", "11.00", "10.00", "9.00", "8.00", "7.00", "6.00"], 654, 1006);

/* Candles: x high top bottom low kind, read off the reference per crop */
var segments = [
  { ox: 0, oy: 40, sx: 3, d: "12 555 572 574 608 r,34 570 580 594 632 c,55 568 578 598 625 c,76 598 600 722 795 c,94 630 658 728 735 r,115 440 442 648 668 r,136 408 430 453 498 c,157 376 397 470 492 r,178 397 423 497 497 c,199 420 441 485 500 r,220 412 418 473 505 c,241 465 475 503 525 c,262 485 503 507 545 c,280 392 411 500 515 r,301 340 358 392 432 c,322 358 408 412 440 w,343 388 420 497 505 c,364 475 505 520 567 r,385 412 457 512 515 r,406 370 388 443 492 r,427 410 421 430 475 r,448 322 408 420 432 c,466 283 346 386 398 r,487 390 455 458 515 r,508 295 313 457 510 r,529 190 228 298 322 r,550 205 255 275 290 r,571 198 220 248 315 c,592 130 148 257 257 r,613 102 114 165 212 c,631 197 228 250 277 r,652 205 207 317 317 c,673 175 178 312 322 r,694 178 178 204 267 c,715 78 136 204 212 r,736 110 136 142 178 r,757 88 133 136 158 c,778 85 145 160 220 c,799 112 178 308 332 c,817 152 186 263 325 r,838 105 205 282 300 c,859 235 292 412 420 c,880 393 427 554 595 c,901 487 498 553 575 r,922 483 510 514 545 c,943 487 508 627 628 c,964 535 553 605 630 r,985 500 550 572 610 c,1003 503 506 570 698 r,1024 528 538 605 615 c,1045 548 571 587 598 r,1066 548 552 568 595 c,1087 560 571 612 620 c,1108 590 600 620 657 c,1129 610 615 647 680 c,1150 630 648 662 690 c,1168 590 596 675 678 r,1189 565 608 620 620 c,1210 615 627 668 678 c,1231 600 615 672 680 r,1252 522 528 615 617 r,1272 490 520 523 537 w,1295 514 538 572 573 c,1316 548 573 578 585 c,1337 588 590 773 785 c,1354 735 750 868 923 c,1375 798 808 870 890 r" },
  { ox: 440, oy: 280, sx: 3, d: "118 498 559 629 629 r,139 603 608 632 640 c,160 533 610 672 678 r,181 578 592 637 650 r,199 570 588 622 627 c,220 630 648 682 690 c,241 625 625 673 728 r,262 637 637 668 672 c,283 640 660 668 684 c,304 657 667 705 708 c,325 693 708 711 728 c,346 703 714 725 748 c,367 724 726 780 786 c,385 755 772 781 783 r,406 770 780 793 802 c,427 785 795 797 802 r,448 810 810 857 920 c,469 843 865 875 880 c,490 850 855 915 915 c,511 873 902 908 912 r,532 865 872 887 920 r,553 835 877 882 885 c,571 850 850 906 906 r,592 792 802 845 857 r,613 807 817 827 833 c,634 803 828 833 836 c,655 747 785 833 835 r,676 770 782 790 806 r,697 782 796 817 825 c,718 800 803 825 828 r,736 750 794 808 828 r,757 708 754 799 828 r,778 755 773 782 790 r,799 758 773 776 788 c,820 770 775 805 812 c,840 809 815 818 825 w,862 771 794 811 814 r,883 773 808 817 823 c,904 803 805 882 890 c,922 885 892 932 960 c,943 928 934 958 960 c,964 940 958 980 1002 c,985 950 950 968 974 r,1006 912 914 941 944 r,1027 890 898 911 920 r,1048 835 838 899 912 r,1069 812 830 849 851 r,1090 810 829 838 848 r,1108 752 757 808 835 r,1129 737 740 773 782 r,1150 703 733 748 764 r,1171 727 727 776 788 c,1192 650 650 781 781 r,1213 505 506 538 568 r,1234 352 449 476 532 r,1255 470 517 522 568 c,1273 520 544 664 677 c,1294 580 580 680 680 r,1315 508 545 597 605 r,1336 393 428 560 582 r,1357 328 374 415 460 r,1378 325 358 400 426 r,1399 265 358 410 440 r,1420 258 262 344 384 r,1441 82 82 268 285 r,1459 87 87 254 278 c" },
  { ox: 860, oy: 290, sx: 2.376, d: "174 252 295 390 408 c,191 345 382 407 430 c,208 350 362 392 458 r,224 303 340 365 380 r,241 318 338 362 408 c,258 325 350 365 368 r,274 322 352 362 402 c,291 212 298 410 428 r,305 170 256 268 285 r,322 230 252 308 355 c,339 273 330 355 360 c,355 322 335 362 418 r,372 265 275 320 322 r,388 210 244 272 275 r,405 222 250 262 278 r,422 122 188 240 288 r,436 142 157 263 305 c,453 250 270 282 310 c,469 290 305 320 342 r,486 302 304 387 395 c,502 427 460 475 512 r,519 378 433 443 455 c,536 395 412 455 497 r,552 383 414 417 425 c,569 400 412 427 430 c,585 418 420 423 473 c,600 414 415 465 467 c,617 455 462 490 507 c,633 438 440 490 510 r,650 448 448 542 542 c,667 503 540 562 565 r,683 525 544 638 668 c,700 590 600 655 660 r,714 622 658 743 743 c,731 720 742 750 792 c,747 735 748 792 800 r,764 690 733 772 775 r,780 688 693 710 755 r,797 703 705 738 750 c,814 725 750 756 762 c,830 735 745 753 755 r,847 740 746 748 762 r,861 750 750 822 848 c,878 820 820 840 857 c,895 805 818 850 865 r,911 742 753 815 823 r,928 750 750 820 830 c,945 820 825 864 866 c,961 780 790 868 875 r,978 770 790 797 806 c,994 772 798 808 810 r,1009 798 798 825 850 c,1025 805 825 840 850 c,1042 835 835 902 905 c,1058 885 904 917 930 c,1075 897 903 926 937 c,1092 930 930 992 1025 c,1108 948 955 1000 1002 r,1125 903 922 953 955 r,1139 900 920 941 945 c,1156 865 920 930 955 r,1172 877 901 960 972 c,1189 927 952 960 978 r,1206 935 958 965 978 c,1222 903 932 940 950 r,1239 900 910 922 945 r,1256 822 850 862 890 r,1272 820 835 850 860 c,1287 840 840 882 900 c,1303 872 882 903 905 c,1320 787 787 898 898 r,1336 772 772 832 848 c,1353 785 791 793 828 c,1370 800 808 830 838 c,1386 830 840 851 860 c,1402 833 850 852 872 w,1419 800 811 842 860 r,1434 825 825 905 912 c" }
];

var candles = el(upper, "g", { "shape-rendering": "crispEdges" });
segments.forEach(function (s) {
  s.d.split(",").forEach(function (row) {
    var p = row.split(" ");
    var x = Math.round(s.ox + p[0] / s.sx);
    var Y = function (v) { return Math.round(s.oy + v / 3); };
    var hi = Y(p[1]), top = Y(p[2]), bot = Y(p[3]), lo = Y(p[4]), kind = p[5];
    if (bot - top < 1) bot = top + 1;
    if (kind === "w") {
      el(candles, "rect", { x: x, y: hi, width: 1, height: lo - hi, fill: "#fff" });
      el(candles, "rect", { x: x - 2, y: top, width: 5, height: 1, fill: "#fff" });
    } else if (kind === "c") {
      el(candles, "rect", { x: x, y: hi, width: 1, height: lo - hi, fill: CYAN });
      el(candles, "rect", { x: x - 2, y: top, width: 5, height: Math.max(bot - top, 2), fill: CYAN });
    } else {
      if (top > hi) el(candles, "rect", { x: x, y: hi, width: 1, height: top - hi, fill: CRED });
      if (lo > bot) el(candles, "rect", { x: x, y: bot, width: 1, height: lo - bot, fill: CRED });
      el(candles, "rect", { x: x - 1.5, y: top + .5, width: 4, height: Math.max(bot - top, 1), fill: "none", stroke: CRED });
    }
  });
});
[[465, 377], [472, 435]].forEach(function (d) {
  el(candles, "rect", { x: d[0] - 2, y: d[1], width: 5, height: 1, fill: "#fff" });
});

function poly(svg, pts, color, w) {
  el(svg, "polyline", {
    points: pts.map(function (p) { return p.join(","); }).join(" "),
    fill: "none", stroke: color, "stroke-width": w || 1
  });
}
/* Moving averages */
poly(upper, [[4,286],[20,285],[35,284],[67,278],[100,272],[133,266],[163,260],[187,251],[213,239],[240,229],[272,219],[300,215],[333,211],[367,206],[400,204],[430,201],[443,202],[467,208],[500,219],[584,268],[615,280],[647,301],[673,318],[713,345],[740,367],[783,403],[833,443],[860,453],[885,466],[923,477],[965,488],[995,497],[1020,498],[1049,492],[1091,487],[1134,479],[1163,475],[1218,474],[1277,476],[1336,477],[1382,483],[1420,489],[1463,502]], "#fff");
poly(upper, [[4,258],[43,261],[83,260],[133,257],[167,254],[217,248],[267,240],[333,238],[400,240],[447,241],[477,245],[500,251],[640,285],[740,308],[807,323],[860,335],[923,342],[986,348],[1049,357],[1129,367],[1163,377],[1218,393],[1264,410],[1298,423],[1336,442],[1382,462],[1407,470],[1463,488]], "#f0f040");

/* Extreme price marks */
el(upper, "polyline", { points: "238,67 250,71", fill: "none", stroke: "#ddd" });
el(upper, "polyline", { points: "241,65 238,67 241,70", fill: "none", stroke: "#ddd" });
el(upper, "text", { x: 253, y: 76, "class": "t-mark" }, "12.98");
el(upper, "line", { x1: 1320, x2: 1331, y1: 631, y2: 631, stroke: "#ddd" });
el(upper, "polyline", { points: "1323,628 1320,631 1323,634", fill: "none", stroke: "#ddd" });
el(upper, "text", { x: 1332, y: 636, "class": "t-mark" }, "4.90");
el(upper, "polygon", { points: "1357,631 1360.500,627 1364,631 1364,635 1357,635", fill: "#f08a50" });

/* Signal marks along the top */
var marks = el(upper, "g", { stroke: "#d020d0", "stroke-width": 1.2 });
[481,486,492,516,526,531,536,544,560,594,600,616,628,656,667,674,686,701,706,711,717,746,757,769,825,837,857,863,868,873,878,887,931,945,953,960,999,1021,1050,1090,1107,1111,1162,1191].forEach(function (v) {
  var x = v * 1.2245, y = 65;
  el(marks, "path", { d: "M" + (x - 2) + " " + (y - 2) + "L" + (x + 2) + " " + (y + 2) + "M" + (x + 2) + " " + (y - 2) + "L" + (x - 2) + " " + (y + 2), fill: "none" });
});
el(upper, "polygon", { points: "1466,51 1471,56 1466,61 1461,56", fill: "none", stroke: "#6a1414" });
el(upper, "rect", { x: 1476.500, y: 51.500, width: 9, height: 10, fill: "none", stroke: "#6a1414" });
el(upper, "line", { x1: 1480.500, x2: 1480.500, y1: 52, y2: 61, stroke: "#6a1414" });

/* Event badges */
el(upper, "text", { x: 440, y: 652, "class": "t-dollar" }, "$");
[[450, "停", "#0f6e78"], [913, "榜", "#7a4410"], [1139, "财", "#0e3468"], [1153, "跌", "#106a18"], [1388, "减", "#106a18"], [1407, "涨", "#7a0c14"]].forEach(function (b) {
  el(upper, "rect", { x: b[0], y: 639, width: 13, height: 13, fill: b[2] });
  el(upper, "text", { x: b[0] + 6.500, y: 650, "class": "t-sig" }, b[1]);
});

/* Current price tag */
el(upper, "rect", { x: 1489, y: 560, width: 51, height: 16, fill: "#1414e8" });
el(upper, "text", { x: 1493, y: 572, "class": "t-tag" }, "5.68");

/* Indicator band */
function z10(a) { return a.map(function (p) { return [p[0] / 2.24, 650 + p[1] / 3]; }); }
function ov(a) { return a.map(function (p) { return [p[0] * 1.2245, p[1] * 1.2245]; }); }
var topLine = z10([[0,362],[40,358],[75,368],[100,325],[140,300],[170,282],[200,280],[240,248],[280,255],[340,228],[370,225],[410,178],[455,125],[500,115],[575,70],[625,90],[660,155],[700,185],[780,225],[850,255],[920,285],[980,290],[1030,330],[1060,370],[1120,470],[1200,590],[1300,700],[1380,790],[1450,835],[1568,875]])
  .concat(ov([[600,776],[625,786],[650,788],[680,788],[700,772],[720,765],[742,750],[752,710],[790,712],[830,704],[855,700],[880,708],[900,720],[920,722],[950,735],[980,752],[1020,767],[1060,778],[1100,795],[1125,802],[1150,800],[1170,800],[1197,802]]));
var botLine = z10([[0,388],[75,385],[100,368],[140,345],[230,310],[300,295],[380,268],[450,215],[520,185],[575,155],[620,147],[660,158],[700,215],[740,255],[800,290],[860,330],[910,347],[950,330],[990,325],[1020,390],[1060,490],[1100,640],[1150,730],[1250,840],[1350,945],[1410,970],[1470,965],[1568,945]])
  .concat(ov([[600,800],[625,806],[650,803],[680,789],[700,780],[720,773],[750,765],[790,745],[830,725],[855,714],[880,714],[900,720],[920,730],[950,760],[980,770],[1020,785],[1060,798],[1100,815],[1125,817],[1150,810],[1170,805],[1197,803]]));
function at(line, x) {
  for (var i = 1; i < line.length; i++) {
    if (x <= line[i][0]) {
      var a = line[i - 1], b = line[i];
      return a[1] + (b[1] - a[1]) * (x - a[0]) / (b[0] - a[0]);
    }
  }
  return line[line.length - 1][1];
}
var bars = el(lower, "g", { "shape-rendering": "crispEdges" });
for (var bx = 2; bx < 1464; bx += 7) {
  var t = at(topLine, bx + 2.5), b = at(botLine, bx + 2.5);
  var hot = bx < 294 || (bx > 833 && bx < 1102);
  el(bars, "rect", { x: bx, y: Math.round(t), width: 5, height: Math.max(Math.round(b - t), 1), fill: hot ? "#f000f0" : "#10e810" });
}
poly(lower, botLine, "#f0f0f0", .8);
poly(lower, topLine, "#f4f4c0", .8);

/* Date axis */
el(axis, "line", { x1: 0, x2: 1540, y1: 1007.500, y2: 1007.500, stroke: RED });
el(axis, "text", { x: 4, y: 1020, "class": "t-date" }, "2019");
[[203,"4"],[329,"5"],[464,"11"],[616,"1"],[767,"2"],[871,"3"],[1015,"4"],[1159,"5"],[1300,"6"],[1430,"7"]].forEach(function (m) {
  el(axis, "line", { x1: m[0] + .5, x2: m[0] + .5, y1: 1007, y2: 1023, stroke: RED });
  el(axis, "text", { x: m[0] + 2, y: 1020, "class": "t-date" }, m[1]);
});
for (var tx = 40; tx < 1489; tx += 35) {
  el(axis, "line", { x1: tx + .5, x2: tx + .5, y1: 1008, y2: 1011, stroke: "#5c1010" });
}
el(axis, "rect", { x: 30, y: 1008, width: 77, height: 15, fill: "#1414e8" });
el(axis, "text", { x: 31, y: 1020, "class": "t-tag" }, "2018/02/26/—");
el(axis, "line", { x1: 1489.500, x2: 1489.500, y1: 1007, y2: 1023, stroke: RED });
el(axis, "text", { x: 1502, y: 1020, "class": "t-day" }, "日线");
```
